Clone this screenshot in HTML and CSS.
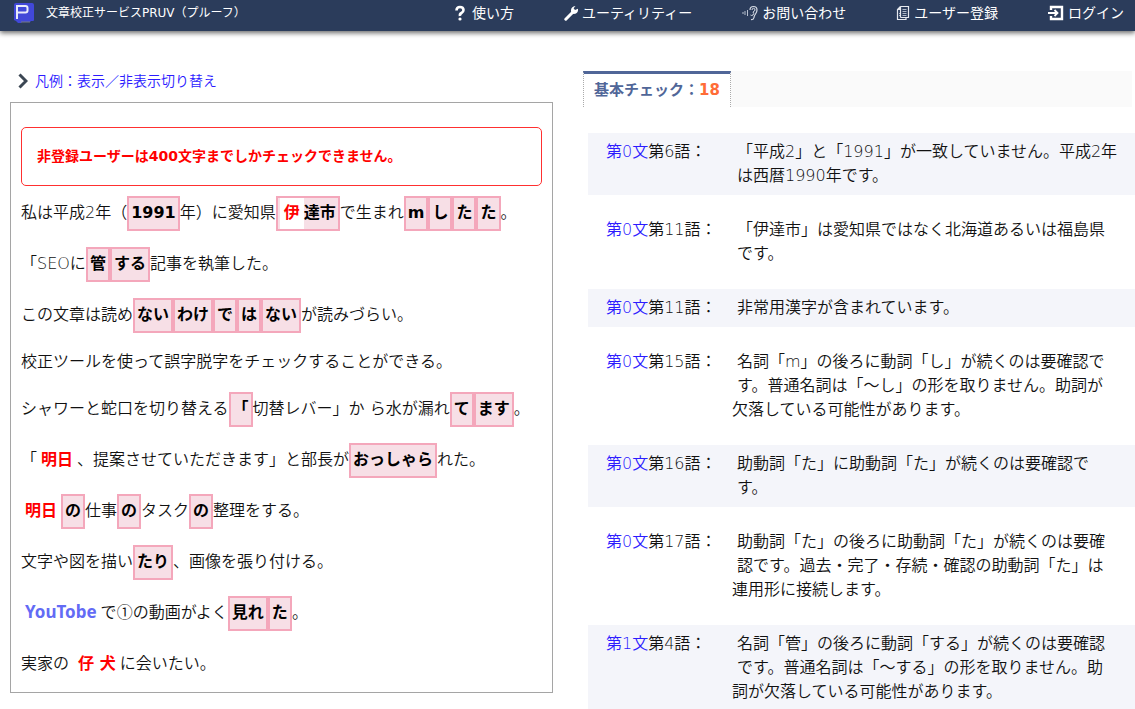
FILE: index.html
```html
<!DOCTYPE html>
<html lang="ja">
<head>
<meta charset="utf-8">
<meta name="viewport" content="width=device-width, initial-scale=1">
<title>文章校正サービスPRUV（プルーフ）</title>
<link rel="stylesheet" href="styles.css">
</head>
<body>
<header class="site-header">
  <a class="brand" href="#">
    <svg class="brand-logo" viewBox="0 0 20 20" aria-hidden="true">
      <path d="M2 0h16q2 0 2 2v15q0 1-1 1h-2l-1 1H8l-1 1H4l-1-1-1-1-2-1V2q0-2 2-2z" fill="#4148d8"/>
      <path d="M3 16V3h8.500q2 0 2 2v2.500q0 2-2 2H3" fill="none" stroke="#e8eaf8" stroke-width="2"/>
      <path d="M7 19h9" stroke="#777a88" stroke-width="1"/>
    </svg>
    <span>文章校正サービスPRUV（プルーフ）</span>
  </a>
  <nav class="site-nav">
    <a href="#"><svg class="icon" viewBox="0 0 14 16" aria-hidden="true"><path d="M2.500 5.500Q2.500 2 6 2t3.500 3Q9.500 7 7.500 8T6 11" fill="none" stroke="#fff" stroke-width="2.600"/><circle cx="6" cy="14" r="1.600" fill="#fff"/></svg>使い方</a>
    <a href="#"><svg class="icon" viewBox="0 0 14 16" aria-hidden="true"><path d="M1.800 14.200L9 7" stroke="#fff" stroke-width="3" stroke-linecap="round"/><path d="M11.500 1L9.600 3.200 11 5l3-1.200Q14.500 9 9.500 9L7 6.500Q6.500 1.500 11.500 1z" fill="#fff"/></svg>ユーティリティー</a>
    <a href="#"><svg class="icon icon-wide" viewBox="0 0 16 16" aria-hidden="true"><path d="M1 7v2M3 6v4M5.500 5v6" stroke="#b8c0d0" stroke-width="1"/><path d="M8 5Q8 1.500 11.500 1.500T15 5q0 2-1.500 4T12 12.500Q11.500 15 9 14.500" fill="none" stroke="#d5dae4" stroke-width="1.200"/><path d="M10 5q0-1.700 1.500-1.700T13 5q-.5 1.500-2 2 1.500 1.500 0 3Q9.500 11 8.500 10" fill="none" stroke="#d5dae4"/></svg>お問い合わせ</a>
    <a href="#"><svg class="icon" viewBox="0 0 14 16" aria-hidden="true"><path d="M4.500 1.500h8v11h-8M4.500 1.500L1.500 4.500v10h8.500v-2M4.500 1.500v3h-3M4.500 4v8.500" fill="none" stroke="#e6e9ef" stroke-width="1.200"/><path d="M6.500 4.500h4M6.500 6.500h4M6.500 8.500h4M6.500 10.500h4M3 8.500h1M3 10.500h1" stroke="#aeb8c9"/></svg>ユーザー登録</a>
    <a href="#"><svg class="icon icon-wide" viewBox="0 0 16 16" aria-hidden="true"><path d="M3 5V2h11v12H3v-3" fill="none" stroke="#fff" stroke-width="2.400"/><path d="M0 8h9M6.500 5l3 3-3 3" fill="none" stroke="#fff" stroke-width="1.800"/></svg>ログイン</a>
  </nav>
</header>

<main class="page">
  <section class="source">
    <a class="legend-toggle" href="#">
      <svg class="chevron" viewBox="0 0 10 16" aria-hidden="true"><path d="M1.500 1.500L8 8l-6.500 6.500" fill="none" stroke="#3b4653" stroke-width="3"/></svg>
      <span>凡例：表示／非表示切り替え</span>
    </a>
    <div class="document">
      <p class="alert">非登録ユーザーは400文字までしかチェックできません。</p>
      <p>私は平成2年（<b class="mark">1991</b>年）に愛知県<b class="mark"><span class="kanji">伊</span>達市</b>で生まれ<b class="mark">m</b><b class="mark">し</b><b class="mark">た</b><b class="mark">た</b>。</p>
      <p>「SEOに<b class="mark">管</b><b class="mark">する</b>記事を執筆した。</p>
      <p>この文章は読め<b class="mark">ない</b><b class="mark">わけ</b><b class="mark">で</b><b class="mark">は</b><b class="mark">ない</b>が読みづらい。</p>
      <p class="plain">校正ツールを使って誤字脱字をチェックすることができる。</p>
      <p>シャワーと蛇口を切り替える<b class="mark">「</b>切替レバー」か ら水が漏れ<b class="mark">て</b><b class="mark">ます</b>。</p>
      <p>「<b class="word">明日</b>、提案させていただきます」と部長が<b class="mark">おっしゃら</b>れた。</p>
      <p><b class="word">明日</b><b class="mark">の</b>仕事<b class="mark">の</b>タスク<b class="mark">の</b>整理をする。</p>
      <p>文字や図を描い<b class="mark">たり</b>、画像を張り付ける。</p>
      <p><b class="word name">YouTobe</b>で<span class="circled">①</span>の動画がよく<b class="mark">見れ</b><b class="mark">た</b>。</p>
      <p class="last">実家の <b class="word">仔 犬</b>に会いたい。</p>
    </div>
  </section>

  <section class="results">
    <div class="tabs"><button class="tab" type="button">基本チェック：<span class="count">18</span></button></div>
    <ul class="issues">
      <li><div class="where"><a href="#">第0文</a>第6語：</div><p>「平成2」と「1991」が一致していません。平成2年は西暦1990年です。</p></li>
      <li><div class="where"><a href="#">第0文</a>第11語：</div><p>「伊達市」は愛知県ではなく北海道あるいは福島県です。</p></li>
      <li><div class="where"><a href="#">第0文</a>第11語：</div><p>非常用漢字が含まれています。</p></li>
      <li><div class="where"><a href="#">第0文</a>第15語：</div><p>名詞「m」の後ろに動詞「し」が続くのは要確認です。普通名詞は「～し」の形を取りません。助詞が欠落している可能性があります。</p></li>
      <li><div class="where"><a href="#">第0文</a>第16語：</div><p>助動詞「た」に助動詞「た」が続くのは要確認です。</p></li>
      <li><div class="where"><a href="#">第0文</a>第17語：</div><p>助動詞「た」の後ろに助動詞「た」が続くのは要確認です。過去・完了・存続・確認の助動詞「た」は連用形に接続します。</p></li>
      <li><div class="where"><a href="#">第1文</a>第4語：</div><p>名詞「管」の後ろに動詞「する」が続くのは要確認です。普通名詞は「～する」の形を取りません。助詞が欠落している可能性があります。</p></li>
    </ul>
  </section>
</main>
</body>
</html>
```
FILE: styles.css
```css
* {
  box-sizing: border-box;
}

body {
  margin: 0;
  overflow: hidden;
  background: #fff;
  color: #111;
  font-family: "DejaVu Sans", "Noto Sans CJK JP", sans-serif;
  font-size: 16px;
  font-weight: 350;
  line-height: 24px;
  text-spacing-trim: space-all;
}

a {
  color: #2c1bff;
  text-decoration: none;
}

b {
  font-weight: 700;
}

p {
  margin: 0;
}

.site-header {
  display: flex;
  justify-content: space-between;
  align-items: center;
  height: 31px;
  padding: 0 11px 5px 14px;
  background: #2b3c5b;
  box-shadow: 0 2px 5px rgba(0, 0, 0, 0.6);
  font-weight: 400;
}

.site-header a {
  display: flex;
  align-items: center;
  color: #fff;
}

.site-header .brand {
  gap: 12px;
  font-size: 12px;
}

.brand-logo {
  width: 20px;
  height: 20px;
}

.site-nav {
  display: flex;
  gap: 50px;
  font-size: 14px;
}

.site-nav a {
  gap: 4px;
}

.icon {
  width: 14px;
  height: 16px;
}

.icon-wide {
  width: 16px;
}

.page {
  display: grid;
  grid-template-columns: 543fr 552fr;
  column-gap: 30px;
  padding: 38px 0 0 10px;
}

.legend-toggle {
  display: flex;
  align-items: center;
  gap: 7px;
  padding-left: 8px;
  font-size: 14px;
}

.chevron {
  width: 10px;
  height: 16px;
}

.document {
  display: flex;
  flex-direction: column;
  gap: 16px;
  margin-top: 9px;
  padding: 24px 10px 15px;
  border: 1px solid #a5a5a5;
}

.document .plain {
  padding: 1px 0 2px;
}

.document .alert {
  margin-bottom: -6px;
  padding: 16px 15px 17px;
  border: 1px solid #ff3030;
  border-radius: 5px;
  color: #f00;
  font-size: 14px;
  font-weight: 700;
}

.document .last {
  padding: 5px 0 1px;
}

.mark {
  display: inline-block;
  padding: 3px 2px 4px;
  border: 2px solid #f4a7bb;
  background: #f7dfe6;
  color: #000;
}

.kanji {
  display: inline-block;
  margin: -3px 0 -4px;
  padding: 3px 4px 4px;
  background: #fff;
  color: #f00;
}

.word {
  padding: 0 4px;
  color: #f00;
}

.name {
  color: #636bf5;
  font-family: "Noto Sans", sans-serif;
  font-size: 17px;
}

.circled {
  font-family: "Noto Sans CJK JP", sans-serif;
  line-height: 1;
}

.results {
  padding-top: 2px;
}

.tabs {
  display: flex;
  margin-right: 3px;
  background: #fafafa;
}

.tab {
  height: 36px;
  padding: 0 10px 2px;
  border: 1px dotted #aaa;
  border-top: 3px solid #506698;
  border-bottom: 0;
  background: #fff;
  color: #506698;
  font: inherit;
  font-size: 15px;
  font-weight: 700;
}

.count {
  color: #ff6c37;
}

.issues {
  margin: 26px 0 0 5px;
  padding: 0;
  list-style: none;
}

.issues li {
  margin-bottom: 16px;
  padding: 7px 17px 7px 18px;
}

.issues li:nth-child(odd) {
  background: #f4f5fa;
}

.issues p {
  margin-left: 126px;
}

.where {
  float: left;
  width: 131px;
  min-height: 40px;
}
```
